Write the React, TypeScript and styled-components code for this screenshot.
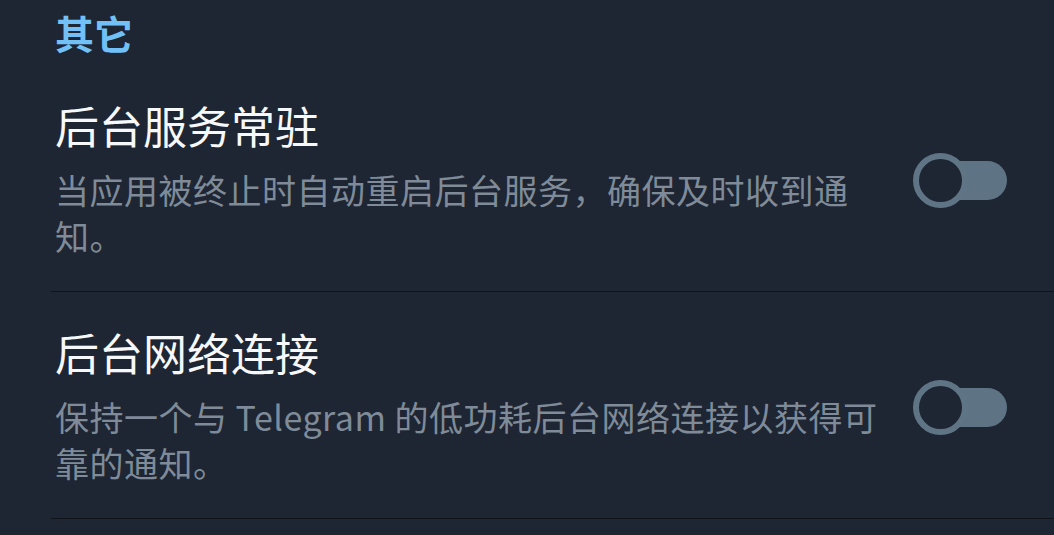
import * as React from 'react';
import styled, { createGlobalStyle } from 'styled-components';

const GlobalStyle = createGlobalStyle`
  html, body {
    margin: 0;
    padding: 0;
    background: #1e2533;
  }
  body {
    font-family: 'Noto Sans CJK SC', 'Noto Sans', sans-serif;
  }
`;

const Screen = styled.div`
  width: 1054px;
  height: 535px;
  overflow: hidden;
  background: #1e2533;
`;

const SectionHeader = styled.h2`
  margin: 0;
  padding: 8px 0 9px 55px;
  font-size: 39px;
  line-height: 48px;
  font-weight: 700;
  color: #71c1f7;
`;

const Row = styled.div`
  display: flex;
  align-items: center;
  gap: 20px;
  margin-left: 51px;
  padding: 36px 47px 32px 4px;
  border-bottom: 1px solid #0f131a;
`;

const TextCol = styled.div`
  flex: 1;
  min-width: 0;
`;

const Title = styled.div`
  font-size: 44px;
  line-height: 48px;
  color: #f7f8fa;
  margin-bottom: 18px;
`;

const Desc = styled.div`
  font-size: 34px;
  line-height: 46px;
  letter-spacing: 0.5px;
  color: #7f8b98;
`;

const Switch = styled.div<{ on?: boolean }>`
  position: relative;
  flex: none;
  width: 94px;
  height: 55px;
`;

const Track = styled.div`
  position: absolute;
  left: 22px;
  right: 0;
  top: 8px;
  height: 39px;
  border-radius: 20px;
  background: #5e7384;
`;

const Knob = styled.div`
  position: absolute;
  left: 0;
  top: 0;
  width: 55px;
  height: 55px;
  box-sizing: border-box;
  border-radius: 50%;
  border: 6px solid #5f7585;
  background: #1e2533;
`;

interface Setting {
  title: string;
  desc: string;
  on: boolean;
}

const settings: Setting[] = [
  {
    title: '后台服务常驻',
    desc: '当应用被终止时自动重启后台服务，确保及时收到通知。',
    on: false,
  },
  {
    title: '后台网络连接',
    desc: '保持一个与 Telegram 的低功耗后台网络连接以获得可靠的通知。',
    on: false,
  },
];

const App: React.FC = () => (
  <Screen>
    <GlobalStyle />
    <SectionHeader>其它</SectionHeader>
    {settings.map((s) => (
      <Row key={s.title}>
        <TextCol>
          <Title>{s.title}</Title>
          <Desc>{s.desc}</Desc>
        </TextCol>
        <Switch on={s.on} role="switch" aria-checked={s.on}>
          <Track />
          <Knob />
        </Switch>
      </Row>
    ))}
  </Screen>
);

export default App;
